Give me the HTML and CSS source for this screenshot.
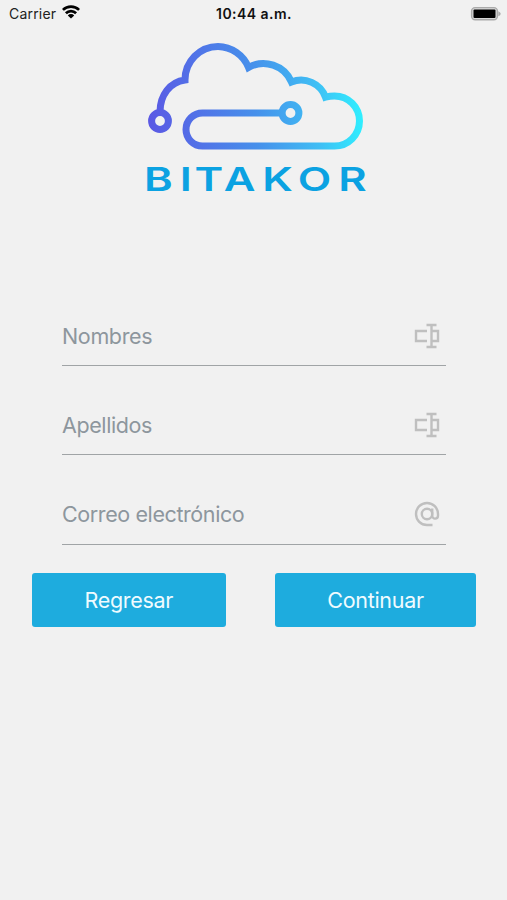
FILE: index.html
```html
<!DOCTYPE html>
<html lang="es">
<head>
<meta charset="utf-8">
<title>Bitakor</title>
<link rel="stylesheet" href="styles.css">
</head>
<body>
<header class="status">
  <div class="carrier"><span>Carrier</span>
    <svg class="wifi" viewBox="0 0 18 14" width="18" height="14"><g fill="none" stroke="#000" stroke-width="2.7"><path d="M.9 4.9a11.700 11.700 0 0 1 16.200 0M3.900 8.300a7.200 7.200 0 0 1 10.200 0"/></g><path d="M5.800 10.400a4.600 4.600 0 0 1 6.400 0L9 13.600z"/></svg>
  </div>
  <time class="clock">10:44 a.m.</time>
  <svg class="battery" viewBox="0 0 32 16" width="32" height="16"><rect x="1.600" y="1.600" width="25.800" height="12.200" rx="3.500" fill="#d8d8d8" stroke="#aaa" stroke-width="1.400"/><rect x="3.500" y="3.500" width="22" height="8.600" rx="1"/><path d="M28.300 5.300q2.400 1 2.400 2.500t-2.400 2.500z" fill="#aaa"/></svg>
</header>
<main>
  <svg class="logo" viewBox="140 35 235 165" width="235" height="165">
    <defs><linearGradient id="sky" gradientUnits="userSpaceOnUse" x1="148" y1="121" x2="363" y2="105"><stop offset="0" stop-color="#5b58e4"/><stop offset=".5" stop-color="#4690eb"/><stop offset=".78" stop-color="#3fbdf4"/><stop offset="1" stop-color="#2ff0ff"/></linearGradient></defs>
    <g fill="none" stroke="url(#sky)" stroke-width="7">
      <circle cx="160" cy="121" r="8.400"/>
      <path d="M160 112C160 95 170 82 185 80A33 33.500 0 0 1 218 46.500A33.500 33.500 0 0 1 248.500 67.500A30.500 30.500 0 0 1 291.500 82A26 26 0 0 1 325.500 97.200Q330 96 334.500 96A25 25 0 0 1 334.500 146H202.500A16.500 16.500 0 0 1 202.500 113H282"/>
      <circle cx="290.500" cy="113" r="8.400"/>
    </g>
    <text class="wordmark" transform="scale(1.34 1)" y="191" x="107.500 134.200 145.200 167 195.800 222.200 252.500">BITAKOR</text>
  </svg>
  <form class="form">
    <div class="field"><span class="label names">Nombres</span>
      <svg class="icon" viewBox="0 0 26 26" width="26" height="26"><path d="M13 8H2v10h11M18 8h6v10h-6M17.500 2v22M12.500 2h10M12.500 24h10"/></svg></div>
    <div class="field"><span class="label last">Apellidos</span>
      <svg class="icon" viewBox="0 0 26 26" width="26" height="26"><path d="M13 8H2v10h11M18 8h6v10h-6M17.500 2v22M12.500 2h10M12.500 24h10"/></svg></div>
    <div class="field"><span class="label mail">Correo electrónico</span>
      <svg class="icon" viewBox="0 0 26 26" width="26" height="26"><circle cx="13" cy="13" r="5.200"/><path d="M18.200 7.500v7.200a2.900 2.900 0 0 0 5.800 0V13a11 11 0 1 0-11 11h5.500"/></svg></div>
    <div class="actions"><button type="button" class="btn back">Regresar</button><button type="button" class="btn next">Continuar</button></div>
  </form>
</main>
</body>
</html>
```
FILE: styles.css
```css
* { box-sizing: border-box; }
body { margin: 0; min-height: 900px; background: #f1f1f1; font-family: Inter, "Liberation Sans", sans-serif; }
.status { display: grid; grid-template-columns: 1fr auto 1fr; align-items: center; height: 27px; padding: 0 5px 0 9px; font-size: 14px; color: #222; }
.carrier { display: flex; align-items: center; gap: 6px; letter-spacing: .2px; }
.wifi { margin-top: -3px; }
.clock { margin-right: 3px; font-weight: 600; letter-spacing: .45px; color: #111; }
.battery { justify-self: end; }
.logo { display: block; margin: 8px 0 0 140px; }
.wordmark { font-size: 32.500px; font-weight: 600; fill: #0ba2e2; }
.form { padding-top: 105px; }
.field { display: flex; align-items: center; justify-content: space-between; width: 384px; height: 61px; margin: 0 0 28.300px 62px; padding: 1px 6.500px 0 0; border-bottom: 1.500px solid #a0a4a6; }
.label { font-size: 21.500px; letter-spacing: -.4px; color: #8d969d; }
.names { letter-spacing: -.35px; }
.icon { fill: none; stroke: #bfbfbf; stroke-width: 2.400; }
.actions { display: flex; justify-content: space-between; width: 444.500px; margin-left: 31.500px; }
.btn { height: 54px; padding: 0; border: 0; border-radius: 3px; background: #1eacde; color: #effbff; font: 21.500px Inter, "Liberation Sans", sans-serif; letter-spacing: -.3px; }
.back { width: 194.500px; }
.next { width: 201px; }
```
